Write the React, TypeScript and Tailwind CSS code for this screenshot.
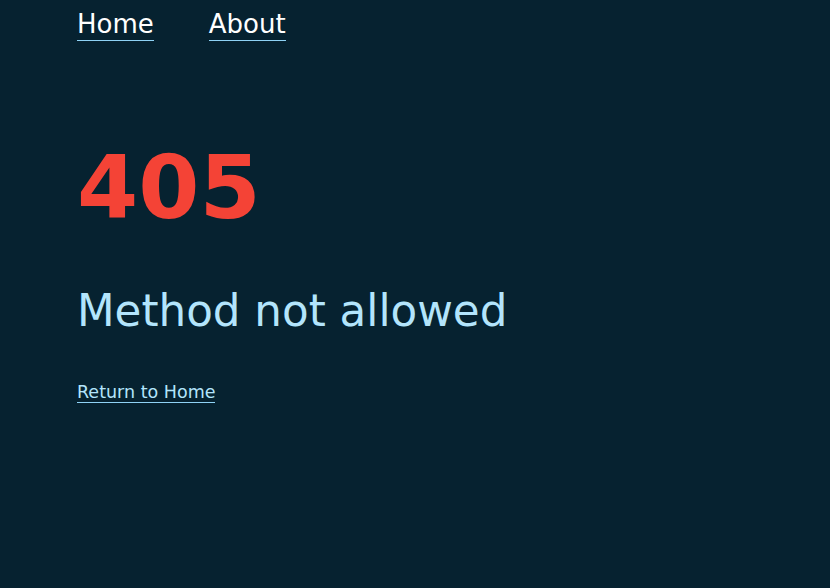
export default function App() {
  return (
    <div className="min-h-[588px] bg-[#062230] font-['DejaVu_Sans',sans-serif] px-[77px]">
      <nav className="flex gap-[55px] pt-[8px]">
        <a className="text-[26px] leading-[32px] text-white border-b border-[#8fd3f5]">Home</a>
        <a className="text-[26px] leading-[32px] text-white border-b border-[#8fd3f5]">About</a>
      </nav>
      <h1 className="mt-[97px] text-[88px] leading-[100px] font-bold text-[#f44336]">405</h1>
      <h2 className="mt-[45px] text-[43.6px] leading-[56px] text-[#b3e5fc]">Method not allowed</h2>
      <div className="mt-[41px]">
        <a className="text-[17.5px] leading-[24px] text-[#b3e5fc] border-b border-[#8fd3f5]">Return to Home</a>
      </div>
    </div>
  );
}
